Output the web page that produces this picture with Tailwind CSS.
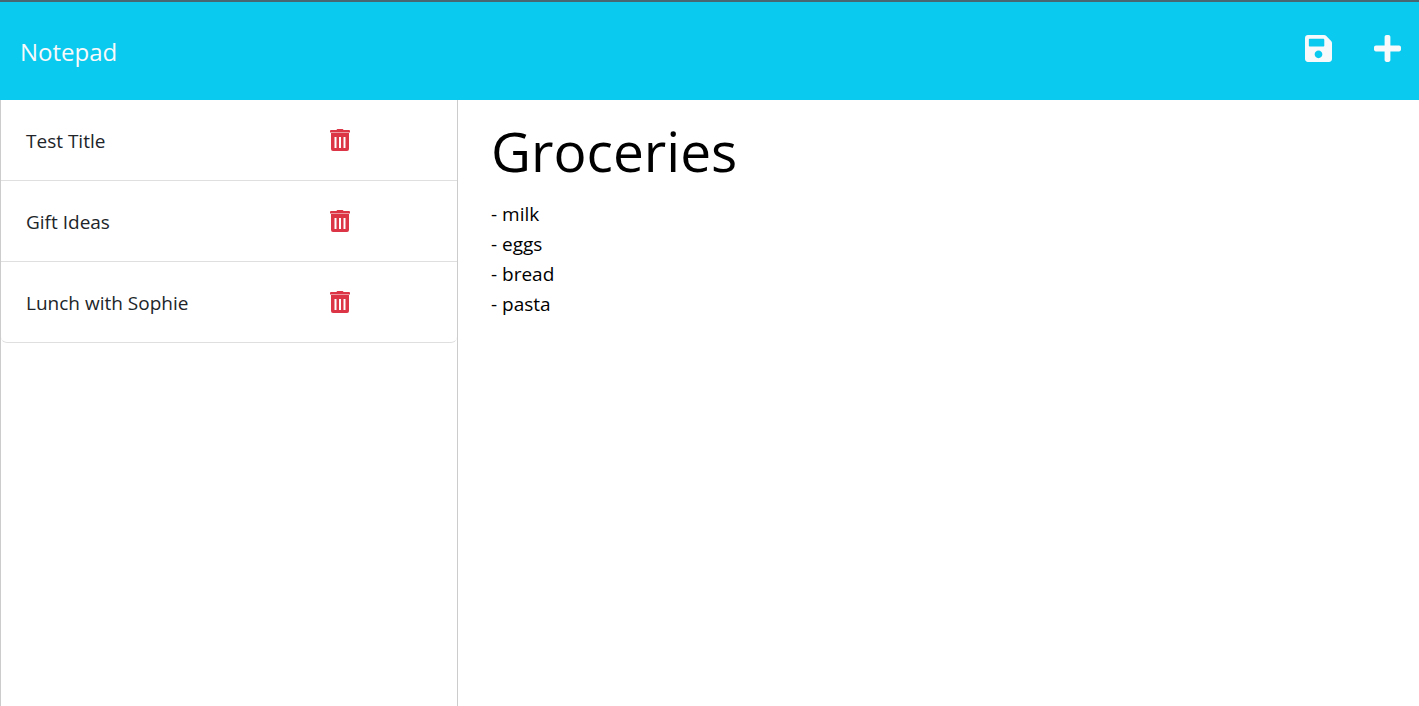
<!DOCTYPE html>
<html lang="en">
<head>
<meta charset="utf-8">
<meta name="viewport" content="width=device-width, initial-scale=1">
<title>Notepad</title>
<script src="https://cdn.jsdelivr.net/npm/@tailwindcss/browser@4"></script>
</head>
<body class="flex min-h-screen flex-col bg-white font-['Open_Sans',sans-serif] text-[19px] leading-[30px] text-[#212529]">
<svg class="hidden" aria-hidden="true">
  <symbol id="trash" viewBox="0 0 20 23">
    <path fill-rule="evenodd" d="M7.500 0h5q.7 0 1 1H19q1 0 1 1v1.500H0V2q0-1 1-1h5.500q.3-1 1-1zM1 4h18v16q0 2-2 2H3q-2 0-2-2zM4.500 8v11h2V8zM9 8v11h2V8zM13.500 8v11h2V8z"/>
  </symbol>
</svg>
<header class="flex h-[100px] items-center justify-between border-t-2 border-[#476872] bg-[#0acaf0] pr-[18px] pl-5 text-[#f8f9fa]">
  <a href="#" class="pt-0.5 text-2xl">Notepad</a>
  <div class="flex items-center gap-[42px] pb-1.5">
    <button type="button" aria-label="Save note"><svg class="block size-[27px]" viewBox="0 32 448 448" fill="currentColor"><path d="M433.941 129.941l-83.882-83.882A48 48 0 0 0 316.118 32H48C21.490 32 0 53.490 0 80v352c0 26.510 21.490 48 48 48h352c26.510 0 48-21.490 48-48V163.882a48 48 0 0 0-14.059-33.941zM224 416c-35.346 0-64-28.654-64-64 0-35.346 28.654-64 64-64s64 28.654 64 64c0 35.346-28.654 64-64 64zm96-304.520V212c0 6.627-5.373 12-12 12H76c-6.627 0-12-5.373-12-12V108c0-6.627 5.373-12 12-12h228.520c3.183 0 6.235 1.264 8.485 3.515l3.480 3.480A11.996 11.996 0 0 1 320 111.480z"/></svg></button>
    <button type="button" aria-label="New note"><svg class="block size-[27px]" viewBox="0 32 448 448" fill="currentColor"><path d="M416 208H272V64c0-17.670-14.330-32-32-32h-32c-17.670 0-32 14.330-32 32v144H32c-17.670 0-32 14.330-32 32v32c0 17.670 14.330 32 32 32h144v144c0 17.670 14.330 32 32 32h32c17.670 0 32-14.330 32-32V304h144c17.670 0 32-14.330 32-32v-32c0-17.670-14.330-32-32-32z"/></svg></button>
  </div>
</header>
<div class="grid grow grid-cols-[458px_1fr]">
  <nav aria-label="Notes" class="border-x border-[#cccccc]">
    <ul>
      <li class="flex h-[81px] items-center border-b border-[#dfdfdf] pl-[25px]">
        <button type="button" class="w-[304px] pt-0.5 text-left">Test Title</button>
        <button type="button" aria-label="Delete Test Title" class="text-[#dc3545]"><svg class="block h-[23px] w-5" fill="currentColor"><use href="#trash"/></svg></button>
      </li>
      <li class="flex h-[81px] items-center border-b border-[#dfdfdf] pl-[25px]">
        <button type="button" class="w-[304px] pt-0.5 text-left">Gift Ideas</button>
        <button type="button" aria-label="Delete Gift Ideas" class="text-[#dc3545]"><svg class="block h-[23px] w-5" fill="currentColor"><use href="#trash"/></svg></button>
      </li>
      <li class="flex h-[81px] items-center rounded-b-md border-b border-[#dfdfdf] pl-[25px]">
        <button type="button" class="w-[304px] pt-0.5 text-left">Lunch with Sophie</button>
        <button type="button" aria-label="Delete Lunch with Sophie" class="text-[#dc3545]"><svg class="block h-[23px] w-5" fill="currentColor"><use href="#trash"/></svg></button>
      </li>
    </ul>
  </nav>
  <main class="flex flex-col pr-8 pl-[33px] text-black">
    <input aria-label="Note title" value="Groceries" class="mt-0.5 h-24 w-full text-[55px] outline-none">
    <textarea aria-label="Note text" class="mt-px w-full grow resize-none outline-none">- milk
- eggs
- bread
- pasta</textarea>
  </main>
</div>
</body>
</html>
